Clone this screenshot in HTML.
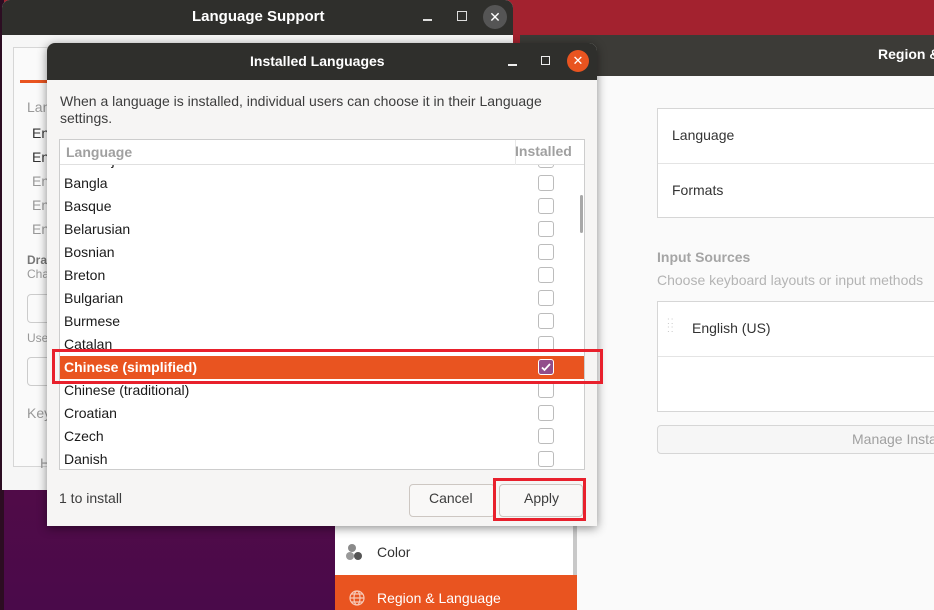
<!DOCTYPE html>
<html><head><meta charset="utf-8">
<style>
*{box-sizing:border-box;margin:0;padding:0}
html,body{width:934px;height:610px;overflow:hidden}
body{position:relative;font-family:"Liberation Sans","DejaVu Sans",sans-serif;font-size:14px;color:#3d3d3d;
background:linear-gradient(180deg,#a3222f 0,#a3222f 40px,#5a0d45 300px,#4a0a4a 610px)}
.abs{position:absolute}
.t{position:absolute;white-space:nowrap}
.x{position:absolute;display:flex;align-items:center;justify-content:center;border-radius:50%;color:#fff}
</style></head><body>
<div class="abs" style="left:0;top:0;width:4px;height:610px;background:#2c0d22"></div>

<!-- Region settings window -->
<div class="abs" style="left:520px;top:35px;width:414px;height:575px;background:#fafafa;overflow:hidden">
<div class="abs" style="left:0;top:0;width:414px;height:41px;background:#3c3b37"></div>
<div class="t" style="left:358px;top:11px;color:#fff;font-weight:bold;font-size:14px">Region &amp; Language</div>
<div class="abs" style="left:137px;top:73px;width:290px;height:110px;border:1px solid #d6d6d6;background:#fff"></div>
<div class="abs" style="left:138px;top:128px;width:290px;height:1px;background:#e4e4e4"></div>
<div class="t" style="left:152px;top:92px;color:#333">Language</div>
<div class="t" style="left:152px;top:147px;color:#333">Formats</div>
<div class="t" style="left:137px;top:214px;color:#a5a5a5;font-weight:bold">Input Sources</div>
<div class="t" style="left:137px;top:237px;color:#b4b4b4">Choose keyboard layouts or input methods</div>
<div class="abs" style="left:137px;top:266px;width:290px;height:111px;border:1px solid #d6d6d6;background:#fff"></div>
<div class="abs" style="left:138px;top:321px;width:290px;height:1px;background:#e4e4e4"></div>
<div class="t" style="left:147px;top:283px;color:#c8c8c8;font-size:10px;line-height:8px;letter-spacing:1px">::<br>::</div>
<div class="t" style="left:172px;top:285px;color:#333">English (US)</div>
<div class="abs" style="left:137px;top:390px;width:290px;height:29px;border:1px solid #d6d6d6;border-radius:4px;background:#f6f6f6"></div>
<div class="t" style="left:332px;top:396px;color:#a0a0a0">Manage Installed Languages</div>
</div>

<!-- sidebar -->
<div class="abs" style="left:335px;top:500px;width:238px;height:110px;background:#fff"></div>
<div class="abs" style="left:573px;top:500px;width:4px;height:110px;background:#c8c8c8"></div>
<div class="abs" style="left:348px;top:544px;width:8px;height:8px;border-radius:50%;background:#8a8a8a;box-shadow:6px 8px 0 #555,-2px 8px 0 #999"></div>
<div class="t" style="left:377px;top:544px;color:#333">Color</div>
<div class="abs" style="left:335px;top:575px;width:242px;height:35px;background:#e95420"></div>
<svg class="abs" style="left:348px;top:589px" width="18" height="18" viewBox="0 0 18 18" fill="none" stroke="#f6c9b8" stroke-width="1.2"><circle cx="9" cy="9" r="7"/><ellipse cx="9" cy="9" rx="3" ry="7"/><path d="M2 9h14M3 5h12M3 13h12"/></svg>
<div class="t" style="left:377px;top:590px;color:#fff">Region &amp; Language</div>

<!-- Language Support window -->
<div class="abs" style="left:2px;top:0;width:511px;height:490px;background:#f6f6f6;border-radius:8px 8px 0 0;overflow:hidden">
  <div class="abs" style="left:0;top:0;width:511px;height:35px;background:#2f2f2c"></div>
  <div class="t" style="left:190px;top:8px;color:#fff;font-weight:bold;font-size:15px">Language Support</div>
  <div class="abs" style="left:421px;top:19px;width:9px;height:1.5px;background:#ddd"></div>
  <div class="abs" style="left:455px;top:11px;width:10px;height:10px;border:1.5px solid #ddd"></div>
  <div class="x" style="left:481px;top:5px;width:24px;height:24px;background:#555;font-size:14px">✕</div>
  <div class="abs" style="left:11px;top:47px;width:500px;height:420px;border:1px solid #d6d6d6;background:#fafafa"></div>
  <div class="abs" style="left:18px;top:80px;width:40px;height:3px;background:#e95420"></div>
  <div class="t" style="left:25px;top:99px;color:#999">Lan</div>
  <div class="t" style="left:30px;top:125px;color:#333">En</div>
  <div class="t" style="left:30px;top:149px;color:#333">En</div>
  <div class="t" style="left:30px;top:173px;color:#999">En</div>
  <div class="t" style="left:30px;top:197px;color:#999">En</div>
  <div class="t" style="left:30px;top:221px;color:#999">En</div>
  <div class="t" style="left:25px;top:253px;color:#777;font-weight:bold;font-size:12px">Dra</div>
  <div class="t" style="left:25px;top:267px;color:#999;font-size:12px">Cha</div>
  <div class="abs" style="left:25px;top:294px;width:40px;height:29px;border:1px solid #ccc;border-radius:4px"></div>
  <div class="t" style="left:25px;top:331px;color:#999;font-size:12px">Use</div>
  <div class="abs" style="left:25px;top:357px;width:40px;height:29px;border:1px solid #ccc;border-radius:4px"></div>
  <div class="t" style="left:25px;top:405px;color:#999">Key</div>
  <div class="t" style="left:38px;top:455px;color:#999">H</div>
</div>

<!-- Installed Languages dialog -->
<div class="abs" style="left:47px;top:43px;width:550px;height:483px;background:#f6f5f4;border-radius:8px 8px 0 0;box-shadow:0 2px 10px rgba(0,0,0,.45);overflow:hidden">
  <div class="abs" style="left:0;top:0;width:550px;height:37px;background:#2f2f2c"></div>
  <div class="t" style="left:203px;top:10px;color:#fff;font-weight:bold;font-size:14px">Installed Languages</div>
  <div class="abs" style="left:461px;top:21px;width:9px;height:1.5px;background:#eee"></div>
  <div class="abs" style="left:494px;top:13px;width:9px;height:9px;border:1.5px solid #eee"></div>
  <div class="x" style="left:520px;top:7px;width:22px;height:22px;background:#e95420;font-size:13px">✕</div>
  <div class="t" style="left:13px;top:50px;color:#3d3d3d;font-size:14px;line-height:17px;white-space:normal;width:530px">When a language is installed, individual users can choose it in their Language settings.</div>
  <div class="abs" style="left:12px;top:96px;width:526px;height:331px;border:1px solid #cdcdcd;background:#fff;overflow:hidden">
    <div class="abs" style="left:0;top:0;width:526px;height:25px;background:#fff;border-bottom:1px solid #e0e0e0;z-index:2"></div>
    <div class="abs" style="left:455px;top:0;width:1px;height:25px;background:#e8e8e8;z-index:3"></div>
    <div class="t" style="left:6px;top:4px;color:#a0a0a0;font-weight:bold;z-index:3">Language</div>
    <div class="t" style="left:455px;top:3px;color:#a0a0a0;font-weight:bold;z-index:3">Installed</div>
    <div id="rows" class="abs" style="left:0;top:12px;width:526px"></div>
    <div class="abs" style="left:520px;top:55px;width:3px;height:38px;border-radius:2px;background:#a8a8a8;z-index:3"></div>
  </div>
  <div class="t" style="left:12px;top:447px;color:#3d3d3d">1 to install</div>
  <div class="abs" style="left:362px;top:441px;width:86px;height:33px;border:1px solid #cdc7c2;border-radius:4px;background:#f9f8f7"></div>
  <div class="t" style="left:382px;top:447px;color:#3d3d3d">Cancel</div>
  <div class="abs" style="left:452px;top:441px;width:84px;height:33px;border:1px solid #cdc7c2;border-radius:4px;background:#f9f8f7"></div>
  <div class="t" style="left:477px;top:447px;color:#3d3d3d">Apply</div>
</div>

<!-- red highlight boxes -->
<div class="abs" style="left:52px;top:349px;width:551px;height:35px;border:3px solid #e8202c"></div>
<div class="abs" style="left:493px;top:478px;width:93px;height:43px;border:3px solid #e8202c"></div>

<script>
var names=["Azerbaijani","Bangla","Basque","Belarusian","Bosnian","Breton","Bulgarian","Burmese","Catalan","Chinese (simplified)","Chinese (traditional)","Croatian","Czech","Danish"];
var h="";
names.forEach(function(n,i){
 var top=i*23-3, sel=i==9;
 h+='<div style="position:absolute;left:0;top:'+top+'px;width:526px;height:23px;'+(sel?'background:#e95420;':'')+'">'+
 '<span style="position:absolute;left:4px;top:3px;white-space:nowrap;color:'+(sel?'#fff;font-weight:bold':'#1a1a1a')+'">'+n+'</span>'+
 '<span style="position:absolute;left:478px;top:3px;width:16px;height:16px;border-radius:3px;'+(sel?'background:#924d8b;border:1px solid #fff;':'border:1px solid #bcbcbc;background:#fff;')+'">'+
 (sel?'<svg width="14" height="14" viewBox="0 0 14 14" style="position:absolute;left:0;top:0"><path d="M3 7.5l2.5 2.5L11 4" stroke="#fff" stroke-width="1.8" fill="none"/></svg>':'')+'</span></div>';
});
document.getElementById("rows").innerHTML=h;
</script>
</body></html>
